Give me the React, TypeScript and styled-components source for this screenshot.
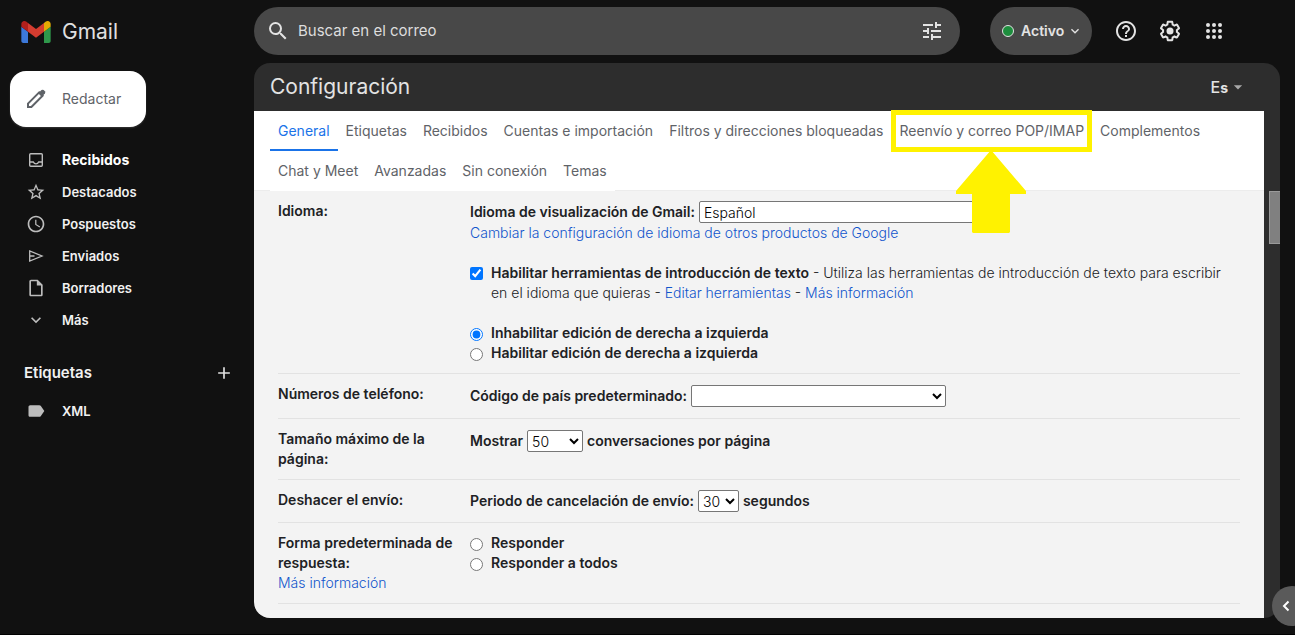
import React from "react";
import styled, { createGlobalStyle, css } from "styled-components";
import {
  MdAccessTime,
  MdAdd,
  MdArrowDropDown,
  MdExpandMore,
  MdHelpOutline,
  MdLabel,
  MdOutlineInsertDriveFile,
  MdSearch,
  MdStarBorder,
  MdTune,
} from "react-icons/md";

const GlobalStyle = createGlobalStyle`
  *, *::before, *::after { box-sizing: border-box; }
  body {
    margin: 0;
    background: #111111;
    color: #202124;
    font-family: Inter, Roboto, "Liberation Sans", sans-serif;
    font-size: 14px;
    line-height: 20px;
    overflow: hidden;
  }
  button, input, select { font: inherit; margin: 0; }
  button { border: 0; padding: 0; background: none; color: inherit; cursor: pointer; }
  svg { display: block; flex: none; }
`;

const Page = styled.div`
  display: grid;
  grid-template-columns: 254px minmax(0, 1fr);
  min-height: 100vh;
  position: relative;
  overflow: hidden;
  border-bottom: 1px solid #000;
`;

const Sidebar = styled.aside`
  color: #f1f1f1;
`;

const Brand = styled.a`
  display: flex;
  align-items: center;
  gap: 11px;
  height: 63px;
  padding-left: 21px;
  color: #e0e0e0;
  font-size: 21px;
  text-decoration: none;
`;

const Compose = styled.button`
  display: flex;
  align-items: center;
  gap: 14px;
  width: 136px;
  height: 56px;
  margin: 8px 0 17px 10px;
  padding-left: 14px;
  border-radius: 16px;
  background: #fff;
  color: #5f6368;
  box-shadow: 0 1px 2px rgba(255, 255, 255, 0.15);
`;

const NavItem = styled.a<{ $active?: boolean }>`
  display: flex;
  align-items: center;
  gap: 16px;
  height: 32px;
  padding-left: 26px;
  color: ${(p) => (p.$active ? "#ffffff" : "#f1f1f1")};
  font-size: ${(p) => (p.$active ? 14 : 13)}px;
  font-weight: ${(p) => (p.$active ? 700 : 600)};
  text-decoration: none;
  svg { color: #bdbdbd; }
`;

const LabelsHeader = styled.div`
  display: flex;
  align-items: center;
  justify-content: space-between;
  padding: 0 20px 0 24px;
  margin: 26px 0 11px;
  h2 { margin: 0; font-size: 15px; line-height: 22px; font-weight: 600; }
`;

const AddButton = styled.button`
  color: #e0e0e0;
`;

const Main = styled.div`
  padding-right: 15px;
`;

const TopBar = styled.header`
  display: flex;
  align-items: center;
  height: 63px;
  padding: 0 44px 1px 0;
  color: #e3e3e3;
`;

const SearchForm = styled.form`
  flex: 1;
  display: flex;
  align-items: center;
  gap: 8px;
  height: 48px;
  margin-right: 30px;
  padding: 0 16px 0 12px;
  border-radius: 24px;
  background: #484848;
`;

const SearchInput = styled.input`
  flex: 1;
  min-width: 0;
  border: 0;
  outline: 0;
  padding: 0;
  background: transparent;
  color: #e3e3e3;
  font-size: 15px;
  &::placeholder { color: #dddddd; opacity: 1; }
`;

const IconButton = styled.button<{ $wide?: boolean }>`
  display: flex;
  align-items: center;
  justify-content: center;
  width: ${(p) => (p.$wide ? 44 : 24)}px;
  height: 40px;
`;

const Status = styled.button`
  display: flex;
  align-items: center;
  gap: 7px;
  width: 102px;
  height: 48px;
  margin-right: 12px;
  padding-left: 12px;
  border-radius: 24px;
  background: #484848;
  color: #e3e3e3;
  font-weight: 600;
  svg { margin-left: -4px; }
`;

const StatusDot = styled.span`
  width: 12px;
  height: 12px;
  border: 1px solid #e3e3e3;
  border-radius: 50%;
  background: #1e8e3e;
`;

const Panel = styled.main`
  border-radius: 16px;
  background: #2d2d2d;
  overflow: hidden;
`;

const PanelHeader = styled.div`
  display: flex;
  align-items: center;
  justify-content: space-between;
  height: 48px;
  padding: 0 32px 0 16px;
  color: #e3e3e3;
  h1 { margin: 0; font-size: 21px; line-height: 28px; font-weight: 400; }
`;

const InputTool = styled.button`
  display: flex;
  align-items: center;
  font-size: 16px;
  font-weight: 500;
  small { font-size: 14px; font-weight: 700; }
  svg { color: #a8a8a8; }
`;

const PanelBody = styled.div`
  display: flex;
  align-items: stretch;
`;

const Sheet = styled.div`
  flex: 1;
  min-width: 0;
  background: #f3f3f3;
`;

const Gutter = styled.div`
  width: 16px;
  padding: 80px 0 0 5px;
`;

const Thumb = styled.div`
  height: 53px;
  border: 1px solid #9a9a9a;
  border-right: 0;
  background: #808080;
`;

const TabBar = styled.nav`
  padding-left: 16px;
  border-bottom: 1px solid #ececec;
  background: #fff;
`;

const TabList = styled.div`
  display: flex;
  flex-wrap: wrap;
  margin-bottom: -1px;
`;

const Tab = styled.button<{ $active?: boolean; $marked?: boolean }>`
  position: relative;
  height: 40px;
  padding: 0 8px;
  background: #fff;
  color: #5f6368;
  border-bottom: 2px solid transparent;
  border-top: 2px solid transparent;
  ${(p) => p.$active && css`color: #1a73e8; border-bottom-color: #1a73e8;`}
  ${(p) =>
    p.$marked &&
    css`
      z-index: 1;
      &::after {
        content: "";
        position: absolute;
        inset: -3px 0;
        border: 5px solid #fff200;
      }
    `}
`;

const ArrowOverlay = styled.svg`
  position: absolute;
  top: 37px;
  left: 50%;
  margin-left: -36px;
  pointer-events: none;
`;

const Settings = styled.div`
  padding: 0 24px 14px;
`;

const Row = styled.section`
  display: grid;
  grid-template-columns: 192px minmax(0, 1fr);
  padding: 10px 0;
  border-bottom: 1px solid #e2e2e2;
`;

const RowLabel = styled.h2`
  margin: 0;
  padding-right: 8px;
  font-size: 14px;
  font-weight: 600;
  line-height: 20px;
`;

const Field = styled.div<{ $tall?: boolean }>`
  display: flex;
  align-items: center;
  gap: 4px;
  height: ${(p) => (p.$tall ? 24 : 22)}px;
  font-weight: 600;
`;

const Select = styled.select<{ $width: number }>`
  width: ${(p) => p.$width}px;
  height: 22px;
  padding: 0;
  border: 1px solid #767676;
  border-radius: 2px;
  background: #fff;
  color: #000;
  font-weight: 300;
`;

const Link = styled.a`
  color: #1155cc;
  font-weight: 300;
  text-decoration: none;
`;

const Group = styled.div`
  margin-top: 20px;
`;

const Option = styled.div`
  display: flex;
  align-items: flex-start;
  gap: 8px;
  color: #202124;
  font-weight: 300;
  input { flex: none; width: 13px; height: 13px; margin-top: 4px; accent-color: #0075ff; }
  input[type="radio"] { margin-top: 5px; }
  label { font-weight: 600; }
`;

const SideToggle = styled.button`
  position: absolute;
  right: -17px;
  bottom: 8px;
  display: flex;
  align-items: center;
  width: 40px;
  height: 40px;
  padding-left: 9px;
  border-radius: 50%;
  background: #5a5a5a;
  color: #fff;
`;

const DockHandle = styled.div`
  position: absolute;
  bottom: -1px;
  left: 539px;
  width: 36px;
  height: 1px;
  background: #555;
`;

const GmailLogo = () => (
  <svg width="30" height="22" viewBox="52 42 88 66" aria-hidden="true">
    <path fill="#3c78d8" d="M58 108h14V74L52 59v43c0 3.32 2.69 6 6 6" />
    <path fill="#2f984b" d="M120 108h14c3.32 0 6-2.69 6-6V59l-20 15" />
    <path fill="#e3aa04" d="M120 48v26l20-15v-8c0-7.42-8.47-11.65-14.4-7.2" />
    <path fill="#d33c30" d="M72 74V48l24 18 24-18v26L96 92" />
    <path fill="#b21f1c" d="M52 51v8l20 15V48l-5.6-4.2c-5.94-4.45-14.4-.22-14.4 7.2" />
  </svg>
);

const PencilIcon = () => (
  <svg width="24" height="24" viewBox="0 0 24 24" fill="none" stroke="currentColor" strokeWidth="2" aria-hidden="true">
    <path d="M4 20v-3.400L15.200 5.400l3.400 3.400L7.400 20z" />
    <path d="M14.300 6.300l3.200-3.200q1.100-.8 2.200 0l1.200 1.200q.8 1.100 0 2.200l-3.200 3.200z" fill="currentColor" stroke="none" />
  </svg>
);

const InboxIcon = () => (
  <svg width="20" height="20" viewBox="0 0 20 20" fill="none" stroke="currentColor" strokeWidth="1.400" aria-hidden="true">
    <rect x="3.700" y="3.700" width="12.600" height="12.600" rx="1" />
    <path d="M3.700 12h3.600c.6 1.300 1.500 1.900 2.700 1.900s2.100-.6 2.700-1.900h3.600" />
  </svg>
);

const SendIcon = () => (
  <svg width="20" height="20" viewBox="0 0 20 20" fill="none" stroke="currentColor" strokeWidth="1.300" aria-hidden="true">
    <path d="M3.700 5v10L16 10zM3.700 10H8.500" />
  </svg>
);

const AppsIcon = () => (
  <svg width="24" height="24" viewBox="0 0 24 24" fill="currentColor" aria-hidden="true">
    {[6, 12, 18].map((y) => [6, 12, 18].map((x) => <circle key={`${x}-${y}`} cx={x} cy={y} r="2" />))}
  </svg>
);

const GearIcon = () => (
  <svg width="24" height="24" viewBox="0 0 24 24" fill="currentColor" aria-hidden="true">
    <path d="M13.850 22.250h-3.700c-.74 0-1.360-.54-1.450-1.270l-.27-1.890c-.27-.14-.53-.29-.79-.46l-1.800.72c-.7.26-1.470-.03-1.810-.65L2.200 15.530c-.35-.66-.2-1.440.36-1.880l1.530-1.190c-.01-.15-.02-.3-.02-.46 0-.15.01-.31.02-.46l-1.520-1.190c-.59-.45-.74-1.260-.37-1.880l1.850-3.190c.34-.62 1.110-.9 1.790-.63l1.810.73c.26-.17.52-.32.78-.46l.27-1.910c.09-.7.71-1.250 1.440-1.250h3.700c.74 0 1.360.54 1.450 1.270l.27 1.890c.27.14.53.29.79.46l1.800-.72c.71-.26 1.480.03 1.820.65l1.840 3.180c.36.66.2 1.440-.36 1.880l-1.520 1.190c.01.15.02.3.02.46s-.01.31-.02.46l1.520 1.190c.56.45.72 1.230.37 1.860l-1.860 3.220c-.34.62-1.110.9-1.800.63l-1.800-.72c-.26.17-.52.32-.78.46l-.27 1.910c-.1.68-.72 1.220-1.460 1.220zm-3.230-2h2.760l.37-2.550.53-.22c.44-.18.88-.44 1.340-.78l.45-.34 2.380.96 1.380-2.400-2.030-1.580.07-.56c.03-.26.06-.51.06-.78s-.03-.53-.06-.78l-.07-.56 2.030-1.580-1.390-2.400-2.390.96-.45-.35c-.42-.32-.87-.58-1.330-.77l-.52-.22-.37-2.550h-2.760l-.37 2.550-.53.21c-.44.19-.88.44-1.340.79l-.45.33-2.380-.95-1.390 2.390 2.030 1.580-.07.56a7 7 0 0 0-.06.79c0 .26.02.53.06.78l.07.56-2.030 1.580 1.380 2.400 2.390-.96.45.35c.43.33.86.58 1.330.77l.53.22.38 2.550z" />
    <circle cx="12" cy="12" r="3.500" />
  </svg>
);

const ChevronLeft = () => (
  <svg width="10" height="12" viewBox="0 0 10 12" fill="none" stroke="currentColor" strokeWidth="2" aria-hidden="true">
    <path d="M7.500 1.500L3 6l4.500 4.500" />
  </svg>
);

const navItems = [
  { text: "Recibidos", icon: <InboxIcon />, active: true },
  { text: "Destacados", icon: <MdStarBorder size={20} /> },
  { text: "Pospuestos", icon: <MdAccessTime size={20} /> },
  { text: "Enviados", icon: <SendIcon /> },
  { text: "Borradores", icon: <MdOutlineInsertDriveFile size={20} /> },
  { text: "Más", icon: <MdExpandMore size={20} /> },
];

const tabs = [
  "General",
  "Etiquetas",
  "Recibidos",
  "Cuentas e importación",
  "Filtros y direcciones bloqueadas",
  "Reenvío y correo POP/IMAP",
  "Complementos",
  "Chat y Meet",
  "Avanzadas",
  "Sin conexión",
  "Temas",
];

export default function App() {
  return (
    <>
      <GlobalStyle />
      <Page>
        <Sidebar>
          <Brand href="#inbox">
            <GmailLogo />
            Gmail
          </Brand>
          <Compose type="button">
            <PencilIcon />
            Redactar
          </Compose>
          <nav aria-label="Carpetas">
            {navItems.map((item) => (
              <NavItem key={item.text} href="#" $active={item.active}>
                {item.icon}
                {item.text}
              </NavItem>
            ))}
          </nav>
          <LabelsHeader>
            <h2>Etiquetas</h2>
            <AddButton type="button" aria-label="Crear etiqueta">
              <MdAdd size={20} />
            </AddButton>
          </LabelsHeader>
          <NavItem href="#xml">
            <MdLabel size={20} />
            XML
          </NavItem>
        </Sidebar>

        <Main>
          <TopBar>
            <SearchForm role="search">
              <IconButton type="button" aria-label="Buscar">
                <MdSearch size={24} />
              </IconButton>
              <SearchInput placeholder="Buscar en el correo" aria-label="Buscar en el correo" />
              <IconButton type="button" aria-label="Opciones de búsqueda">
                <MdTune size={24} />
              </IconButton>
            </SearchForm>
            <Status type="button">
              <StatusDot />
              Activo
              <MdExpandMore size={16} />
            </Status>
            <IconButton type="button" $wide aria-label="Asistencia">
              <MdHelpOutline size={24} />
            </IconButton>
            <IconButton type="button" $wide aria-label="Configuración">
              <GearIcon />
            </IconButton>
            <IconButton type="button" $wide aria-label="Aplicaciones">
              <AppsIcon />
            </IconButton>
          </TopBar>

          <Panel>
            <PanelHeader>
              <h1>Configuración</h1>
              <InputTool type="button">
                <span>
                  E<small>s</small>
                </span>
                <MdArrowDropDown size={20} />
              </InputTool>
            </PanelHeader>
            <PanelBody>
              <Sheet>
                <TabBar>
                  <TabList>
                    {tabs.map((tab, i) => (
                      <Tab key={tab} type="button" $active={i === 0} $marked={i === 5}>
                        {tab}
                        {i === 5 && (
                          <ArrowOverlay width="70" height="84" viewBox="0 0 70 84" aria-hidden="true">
                            <path fill="#fff200" d="M35 0l35 41v3H54v38l-1 1H17l-1-1V44H0v-3z" />
                          </ArrowOverlay>
                        )}
                      </Tab>
                    ))}
                  </TabList>
                </TabBar>
                <Settings>
                  <Row>
                    <RowLabel>Idioma:</RowLabel>
                    <div>
                      <Field>
                        <label htmlFor="language">Idioma de visualización de Gmail:</label>
                        <Select id="language" $width={290}>
                          <option>Español</option>
                        </Select>
                      </Field>
                      <Link href="#">Cambiar la configuración de idioma de otros productos de Google</Link>
                      <Group>
                        <Option>
                          <input id="tools" type="checkbox" defaultChecked />
                          <div>
                            <label htmlFor="tools">Habilitar herramientas de introducción de texto</label> - Utiliza las
                            herramientas de introducción de texto para escribir en el idioma que quieras -{" "}
                            <Link href="#">Editar herramientas</Link> - <Link href="#">Más información</Link>
                          </div>
                        </Option>
                      </Group>
                      <Group>
                        <Option>
                          <input id="rtl-off" type="radio" name="rtl" defaultChecked />
                          <label htmlFor="rtl-off">Inhabilitar edición de derecha a izquierda</label>
                        </Option>
                        <Option>
                          <input id="rtl-on" type="radio" name="rtl" />
                          <label htmlFor="rtl-on">Habilitar edición de derecha a izquierda</label>
                        </Option>
                      </Group>
                    </div>
                  </Row>
                  <Row>
                    <RowLabel>Números de teléfono:</RowLabel>
                    <Field $tall>
                      <label htmlFor="country">Código de país predeterminado:</label>
                      <Select id="country" $width={255}>
                        <option></option>
                      </Select>
                    </Field>
                  </Row>
                  <Row>
                    <RowLabel>Tamaño máximo de la página:</RowLabel>
                    <Field $tall>
                      <label htmlFor="page-size">Mostrar</label>
                      <Select id="page-size" $width={56}>
                        <option>50</option>
                      </Select>
                      conversaciones por página
                    </Field>
                  </Row>
                  <Row>
                    <RowLabel>Deshacer el envío:</RowLabel>
                    <Field>
                      <label htmlFor="undo">Periodo de cancelación de envío:</label>
                      <Select id="undo" $width={41}>
                        <option>30</option>
                      </Select>
                      segundos
                    </Field>
                  </Row>
                  <Row>
                    <div>
                      <RowLabel>Forma predeterminada de respuesta:</RowLabel>
                      <Link href="#">Más información</Link>
                    </div>
                    <div>
                      <Option>
                        <input id="reply" type="radio" name="reply" />
                        <label htmlFor="reply">Responder</label>
                      </Option>
                      <Option>
                        <input id="reply-all" type="radio" name="reply" />
                        <label htmlFor="reply-all">Responder a todos</label>
                      </Option>
                    </div>
                  </Row>
                </Settings>
              </Sheet>
              <Gutter>
                <Thumb />
              </Gutter>
            </PanelBody>
          </Panel>
        </Main>
        <SideToggle type="button" aria-label="Mostrar panel lateral">
          <ChevronLeft />
        </SideToggle>
        <DockHandle />
      </Page>
    </>
  );
}
